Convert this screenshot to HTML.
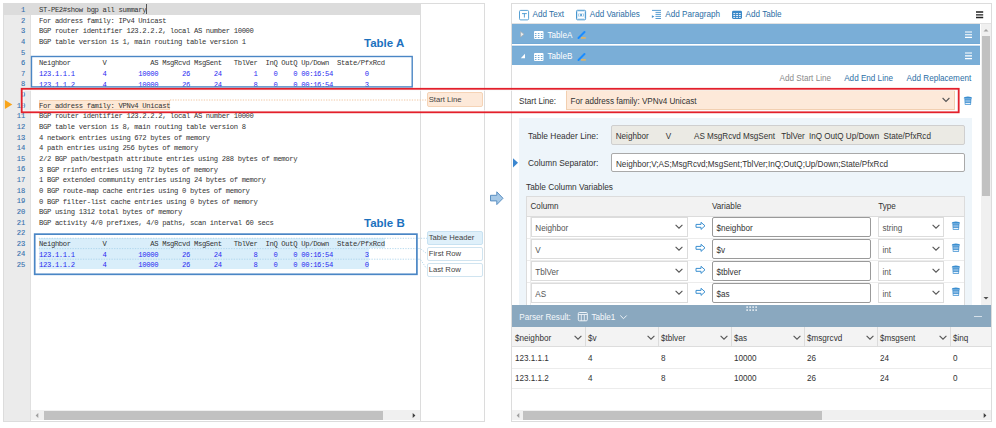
<!DOCTYPE html>
<html><head><meta charset="utf-8"><style>
*{margin:0;padding:0;box-sizing:border-box}
html,body{width:996px;height:428px;overflow:hidden;background:#fff;font-family:"Liberation Sans",sans-serif;position:relative}
.a{position:absolute}
/* left panel */
#lp{position:absolute;left:3px;top:3px;width:482px;height:419px;border:1px solid #dcdcdc;background:#fff}
#gut{position:absolute;left:4px;top:4px;width:27px;height:417px;background:#ebebeb;border-right:1px solid #e0e0e0}
#codebr{position:absolute;left:420px;top:4px;width:1px;height:417px;background:#dcdcdc}
.hl1{position:absolute;left:4px;top:4px;width:416px;height:10.6px;background:#dcdcdc}
.ln{position:absolute;left:4px;width:21.3px;text-align:right;font-family:"Liberation Mono",monospace;font-size:7.1px;line-height:10.63px;height:10.63px;color:#3470ae;padding-top:1px;-webkit-text-stroke:0.1px #3470ae}
.cl{position:absolute;left:39px;white-space:pre;font-family:"Liberation Mono",monospace;font-size:7.2px;letter-spacing:-0.34px;line-height:10.63px;height:10.63px;color:#333;padding-top:1.2px}
.cl.blue{color:#2b2bf0}
.tlabel{position:absolute;font-weight:bold;font-size:11.5px;color:#1c71be;line-height:12px}
.ui{font-family:"Liberation Sans",sans-serif;font-size:8.15px;line-height:10px;white-space:pre;padding-top:1.4px}
.lbox{position:absolute;left:427.2px;width:55.6px;height:14px;border:1px solid #d0e4f0;border-radius:2px;background:#fff;font-size:7.7px;line-height:12.2px;padding-left:0.5px;color:#444}
/* scrollbars */
.hsb{position:absolute;height:10px;background:#f0f0f0}
.thumb{position:absolute;background:#c1c1c1}
/* right panel */
#rp{position:absolute;left:511px;top:3px;width:481px;height:419px;border:1px solid #dcdcdc;background:#fff}
.bar{position:absolute;left:512px;width:468px;background:#7aaed7}
.tb{position:absolute;color:#2c6ea5}

</style></head><body>
<div id="lp"></div>
<div id="gut"></div>
<div class="hl1"></div>
<div id="codebr"></div>
<!-- code highlights -->
<div class="a" style="left:38.5px;top:99.5px;width:131.5px;height:10.7px;background:#fde8d6;border:1px solid #f5d2b3"></div>
<div class="a" style="left:38.7px;top:237.9px;width:346.6px;height:10.2px;background:#d9eefa"></div>
<div class="a" style="left:38.7px;top:248.1px;width:330.3px;height:21.3px;background:#d9eefa"></div>
<svg class="a" style="left:0;top:0" width="996" height="428" viewBox="0 0 996 428">
<path d="M38.7 238.3H427M38.7 248.6H420.3L426.5 253.4M38.7 259.2H420.3L426.5 268.5" fill="none" stroke="#a6d0ea" stroke-width="0.8" stroke-dasharray="1.3 1.3"/>
<path d="M170 100H427" fill="none" stroke="#f0c6a2" stroke-width="1" stroke-dasharray="1.3 1.3"/>
<path d="M4.9 100.1L12.3 104.6L4.9 109.1Z" fill="#f9a51a"/>
</svg>
<div class="ln" style="top:4.00px">1</div>
<div class="ln" style="top:14.63px">2</div>
<div class="ln" style="top:25.26px">3</div>
<div class="ln" style="top:35.89px">4</div>
<div class="ln" style="top:46.52px">5</div>
<div class="ln" style="top:57.15px">6</div>
<div class="ln" style="top:67.78px">7</div>
<div class="ln" style="top:78.41px">8</div>
<div class="ln" style="top:89.04px">9</div>
<div class="ln" style="top:99.67px">10</div>
<div class="ln" style="top:110.30px">11</div>
<div class="ln" style="top:120.93px">12</div>
<div class="ln" style="top:131.56px">13</div>
<div class="ln" style="top:142.19px">14</div>
<div class="ln" style="top:152.82px">15</div>
<div class="ln" style="top:163.45px">16</div>
<div class="ln" style="top:174.08px">17</div>
<div class="ln" style="top:184.71px">18</div>
<div class="ln" style="top:195.34px">19</div>
<div class="ln" style="top:205.97px">20</div>
<div class="ln" style="top:216.60px">21</div>
<div class="ln" style="top:227.23px">22</div>
<div class="ln" style="top:237.86px">23</div>
<div class="ln" style="top:248.49px">24</div>
<div class="ln" style="top:259.12px">25</div>
<div class="cl" style="top:4.00px">ST-PE2#show bgp all summary</div>
<div class="cl" style="top:14.63px">For address family: IPv4 Unicast</div>
<div class="cl" style="top:25.26px">BGP router identifier 123.2.2.2, local AS number 10000</div>
<div class="cl" style="top:35.89px">BGP table version is 1, main routing table version 1</div>
<div class="cl" style="top:46.52px"></div>
<div class="cl" style="top:57.15px">Neighbor        V           AS MsgRcvd MsgSent   TblVer  InQ OutQ Up/Down  State/PfxRcd</div>
<div class="cl blue" style="top:67.78px">123.1.1.1       4        10000      26      24        1    0    0 00:16:54        0</div>
<div class="cl blue" style="top:78.41px">123.1.1.2       4        10000      26      24        8    0    0 00:16:54        3</div>
<div class="cl" style="top:89.04px"></div>
<div class="cl" style="top:99.67px">For address family: VPNv4 Unicast</div>
<div class="cl" style="top:110.30px">BGP router identifier 123.2.2.2, local AS number 10000</div>
<div class="cl" style="top:120.93px">BGP table version is 8, main routing table version 8</div>
<div class="cl" style="top:131.56px">4 network entries using 672 bytes of memory</div>
<div class="cl" style="top:142.19px">4 path entries using 256 bytes of memory</div>
<div class="cl" style="top:152.82px">2/2 BGP path/bestpath attribute entries using 288 bytes of memory</div>
<div class="cl" style="top:163.45px">3 BGP rrinfo entries using 72 bytes of memory</div>
<div class="cl" style="top:174.08px">1 BGP extended community entries using 24 bytes of memory</div>
<div class="cl" style="top:184.71px">0 BGP route-map cache entries using 0 bytes of memory</div>
<div class="cl" style="top:195.34px">0 BGP filter-list cache entries using 0 bytes of memory</div>
<div class="cl" style="top:205.97px">BGP using 1312 total bytes of memory</div>
<div class="cl" style="top:216.60px">BGP activity 4/0 prefixes, 4/0 paths, scan interval 60 secs</div>
<div class="cl" style="top:227.23px"></div>
<div class="cl" style="top:237.86px">Neighbor        V           AS MsgRcvd MsgSent   TblVer  InQ OutQ Up/Down  State/PfxRcd</div>
<div class="cl blue" style="top:248.49px">123.1.1.1       4        10000      26      24        8    0    0 00:16:54        3</div>
<div class="cl blue" style="top:259.12px">123.1.1.2       4        10000      26      24        8    0    0 00:16:54        0</div>
<div class="a" style="left:145.9px;top:4.2px;width:1.5px;height:10.3px;background:#555"></div>
<svg class="a" style="left:0;top:0" width="996" height="428" viewBox="0 0 996 428"><rect x="31.5" y="56.5" width="380.7" height="30.4" fill="none" stroke="#4a86c5" stroke-width="1.4"/><rect x="34.7" y="234.15" width="382.2" height="40.15" fill="none" stroke="#4a86c5" stroke-width="1.7"/></svg>
<div class="tlabel" style="left:364px;top:37px">Table A</div>
<div class="tlabel" style="left:364px;top:217px">Table B</div>
<div class="lbox" style="top:92px;height:15px;line-height:13.2px;background:#fde9d9;border-color:#f5d3b6">Start Line</div>
<div class="lbox" style="top:230.5px;background:#dff0fa;border-color:#c8e2f2">Table Header</div>
<div class="lbox" style="top:247px">First Row</div>
<div class="lbox" style="top:263px">Last Row</div>
<div class="hsb" style="left:31px;top:410px;width:389px"></div>
<div class="thumb" style="left:43.5px;top:410.5px;width:339.5px;height:9px"></div>

<!-- arrow between panels -->
<svg class="a" style="left:488px;top:189px" width="18" height="18" viewBox="0 0 18 18"><path d="M2.5 6.3H8.8V2.8L15 9.3L8.8 15.6V11.9H2.5Z" fill="#a6c8e6" stroke="#5a8fc2" stroke-width="1"/></svg>

<div id="rp"></div>
<!-- toolbar -->
<div class="a" style="left:512px;top:23px;width:479px;height:1px;background:#e2e2e2"></div>
<svg class="a" style="left:518px;top:9px" width="12" height="12" viewBox="0 0 12 12"><rect x="1.5" y="1.4" width="9.1" height="9.5" rx="1.2" fill="none" stroke="#4596cf" stroke-width="0.9"/><path d="M4 4.6H8.8M6.4 4.6V8.5" stroke="#4596cf" stroke-width="0.9" fill="none"/></svg>
<div class="tb ui" style="left:532.5px;top:9px">Add Text</div>
<svg class="a" style="left:575px;top:9px" width="12" height="12" viewBox="0 0 12 12"><rect x="1.5" y="1.3" width="9.1" height="9.5" rx="1" fill="none" stroke="#4596cf" stroke-width="1"/><rect x="2.6" y="2.6" width="6.9" height="6.9" fill="none" stroke="#bcdaf0" stroke-width="0.6"/><path d="M3.9 4.5Q3.3 6 3.9 7.6M8.2 4.5Q8.8 6 8.2 7.6" stroke="#6aaad8" stroke-width="0.7" fill="none"/><path d="M5.3 4.6L6.8 7.4M6.8 4.6L5.3 7.4" stroke="#3d8ecb" stroke-width="0.9"/></svg>
<div class="tb ui" style="left:589.8px;top:9px">Add Variables</div>
<svg class="a" style="left:650px;top:8px" width="13" height="13" viewBox="0 0 13 13"><path d="M2 2.4H11M5.5 4.4H11M5.5 6.4H11M5.5 8.4H11M5.5 10.5H11" stroke="#4592cd" stroke-width="0.9"/><path d="M1.9 7.3L4.4 8.6L1.9 9.9Z" fill="#4592cd"/></svg>
<div class="tb ui" style="left:665.3px;top:9px">Add Paragraph</div>
<svg class="a" style="left:731px;top:10px" width="12" height="10" viewBox="0 0 12 10"><rect x="1" y="0.8" width="10" height="8.2" rx="1.4" fill="#3a88c8"/><path d="M2.3 3.6H4.2M5.1 3.6H7M7.9 3.6H9.8M2.3 5.5H4.2M5.1 5.5H7M7.9 5.5H9.8M2.3 7.4H4.2M5.1 7.4H7M7.9 7.4H9.8" stroke="#fff" stroke-width="0.9"/></svg>
<div class="tb ui" style="left:745.6px;top:9px">Add Table</div>
<svg class="a" style="left:975px;top:10px" width="10" height="10" viewBox="0 0 10 10"><path d="M1 2H8.2M1 4.9H8.2M1 7.5H8.2" stroke="#222" stroke-width="1.3"/></svg>

<!-- table bars -->
<div class="bar" style="top:24px;height:19.5px"></div>
<div class="bar" style="top:46px;height:18.5px"></div>
<div class="a" style="left:512px;top:45px;width:468px;height:1px;background:#cfe1f0"></div>
<div class="a" style="left:512px;top:43px;width:468px;height:1px;background:#72a9d6"></div>
<div class="a" style="left:512px;top:46px;width:468px;height:1px;background:#72a9d6"></div>
<svg class="a" style="left:519px;top:30px" width="7" height="8" viewBox="0 0 7 8"><path d="M1.6 1.6L5 4.3L1.6 7Z" fill="#e8eef2" stroke="#a9a9a9" stroke-width="0.6"/></svg>
<svg class="a" style="left:519px;top:52px" width="8" height="8" viewBox="0 0 8 8"><path d="M6 1.8V6.2H1.8Z" fill="#fff"/></svg>
<svg class="a" style="left:533px;top:30px" width="12" height="10" viewBox="0 0 12 10"><rect x="1" y="1" width="9.5" height="8" rx="1" fill="#fff"/><path d="M1.85 3h1.6v1h-1.6zM4.85 3h1.6v1h-1.6zM7.85 3h1.6v1h-1.6zM1.85 5h1.6v1h-1.6zM4.85 5h1.6v1h-1.6zM7.85 5h1.6v1h-1.6zM1.85 6.9h1.6v1h-1.6zM4.85 6.9h1.6v1h-1.6zM7.85 6.9h1.6v1h-1.6z" fill="#7aaed7"/></svg>
<svg class="a" style="left:533px;top:52px" width="12" height="10" viewBox="0 0 12 10"><rect x="1" y="1" width="9.5" height="8" rx="1" fill="#fff"/><path d="M1.85 3h1.6v1h-1.6zM4.85 3h1.6v1h-1.6zM7.85 3h1.6v1h-1.6zM1.85 5h1.6v1h-1.6zM4.85 5h1.6v1h-1.6zM7.85 5h1.6v1h-1.6zM1.85 6.9h1.6v1h-1.6zM4.85 6.9h1.6v1h-1.6zM7.85 6.9h1.6v1h-1.6z" fill="#7aaed7"/></svg>
<div class="a ui" style="left:547.5px;top:29.5px;color:#fff">TableA</div>
<div class="a ui" style="left:547.5px;top:51px;color:#fff">TableB</div>
<svg class="a" style="left:576px;top:30px" width="12" height="10" viewBox="0 0 12 10"><path d="M2.5 8L8.5 2" stroke="#1a8cff" stroke-width="2" stroke-linecap="round"/><path d="M5 7.9H9.8" stroke="#e8b45a" stroke-width="1.5"/></svg>
<svg class="a" style="left:576px;top:51.5px" width="12" height="10" viewBox="0 0 12 10"><path d="M2.5 8L8.5 2" stroke="#1a8cff" stroke-width="2" stroke-linecap="round"/><path d="M5 7.9H9.8" stroke="#e8b45a" stroke-width="1.5"/></svg>
<svg class="a" style="left:964px;top:29px" width="10" height="11" viewBox="0 0 10 11"><path d="M1 3H8M1 5.75H8M1 8.4H8" stroke="#fff" stroke-width="1.2"/></svg>
<svg class="a" style="left:964px;top:50px" width="10" height="11" viewBox="0 0 10 11"><path d="M1 3H8M1 5.8H8M1 8.7H8" stroke="#fff" stroke-width="1.2"/></svg>

<!-- vertical scrollbar -->
<div class="a" style="left:980.5px;top:24px;width:10.5px;height:281px;background:#f0f0f0"></div>
<div class="a" style="left:981.5px;top:36px;width:8.5px;height:160px;background:#c1c1c1"></div>
<svg class="a" style="left:981px;top:26px" width="10" height="8" viewBox="0 0 10 8"><path d="M2.5 5.5L5 3L7.5 5.5Z" fill="#a3a3a3"/></svg>
<svg class="a" style="left:981px;top:294px" width="10" height="8" viewBox="0 0 10 8"><path d="M2.5 3L5 5.5L7.5 3Z" fill="#505050"/></svg>

<!-- action links -->
<div class="a ui" style="left:779.5px;top:72.8px;color:#8a8a8a">Add Start Line</div>
<div class="a ui tb" style="left:844.2px;top:72.8px">Add End Line</div>
<div class="a ui tb" style="left:906.6px;top:72.8px">Add Replacement</div>

<!-- start line row -->
<div class="a ui" style="left:519px;top:95.5px;color:#333">Start Line:</div>
<div class="a" style="left:565.8px;top:90.2px;width:389.6px;height:19.8px;background:#fde9d9;border:1px solid #f2cfb0"></div>
<div class="a ui" style="left:570.6px;top:95.5px;color:#333">For address family: VPNv4 Unicast</div>
<svg class="a" style="left:941px;top:96px" width="10" height="8" viewBox="0 0 10 8"><path d="M1.6 2L5 5.4L8.4 2" stroke="#555" stroke-width="1.1" fill="none"/></svg>
<svg class="a" style="left:962px;top:95.4px" width="12" height="11" viewBox="0 0 12 11"><path d="M1.8 3.2Q1.8 1.6 5.9 1.6Q10 1.6 10 3.2V3.6H1.8Z" fill="#3b8ed0"/><path d="M2.4 3.4H9.4L9 9.8H2.8Z" fill="#3b8ed0"/><path d="M3.3 5.2H8.5M3.3 6.8H8.5" stroke="#c5def3" stroke-width="0.75"/><path d="M3.4 8.5H8.4" stroke="#e6f1fa" stroke-width="1"/></svg>

<!-- red highlight box -->
<svg class="a" style="left:0;top:0" width="996" height="428" viewBox="0 0 996 428"><rect x="23.1" y="90.2" width="934.2" height="20.7" fill="none" stroke="#fafafa" stroke-width="1"/><rect x="21.7" y="88.8" width="937" height="23.5" fill="none" stroke="#e3202b" stroke-width="1.8"/></svg>

<!-- table section -->
<div class="a" style="left:519.3px;top:117.8px;width:452.5px;height:187.5px;background:#eef5fa"></div>
<svg class="a" style="left:512px;top:157px" width="8" height="12" viewBox="0 0 8 12"><path d="M1 1.3L6 5.8L1 10.5Z" fill="#3b86cf"/></svg>
<div class="a ui" style="left:528px;top:129.5px;color:#333;font-size:8.4px">Table Header Line:</div>
<div class="a" style="left:611.2px;top:125.3px;width:354px;height:19.4px;background:#ebeae4;border:1px solid #cfcfcf;border-radius:2px"></div>
<div class="a ui" style="left:615.7px;top:130.8px;color:#333;word-spacing:-0.13px">Neighbor        V           AS MsgRcvd MsgSent   TblVer  InQ OutQ Up/Down  State/PfxRcd</div>
<div class="a ui" style="left:528px;top:157px;color:#333;font-size:8.4px">Column Separator:</div>
<div class="a" style="left:611.2px;top:153px;width:354px;height:19.4px;background:#fff;border:1px solid #a9a9a9;border-radius:2px"></div>
<div class="a ui" style="left:616px;top:158.6px;color:#333">Neighbor;V;AS;MsgRcvd;MsgSent;TblVer;InQ;OutQ;Up/Down;State/PfxRcd</div>
<div class="a ui" style="left:526px;top:180.9px;color:#333;font-size:8.3px">Table Column Variables</div>

<!-- column variables table -->
<div class="a" style="left:526.2px;top:195.5px;width:439px;height:110px;background:#fff;border:1px solid #dcdcdc;border-bottom:none"></div>
<div class="a" style="left:527.2px;top:196.5px;width:437px;height:20.5px;background:#f2f2f2;border-bottom:1px solid #dcdcdc"></div>
<div class="a ui" style="left:530.5px;top:200.5px;color:#333">Column</div>
<div class="a ui" style="left:712px;top:200.5px;color:#333">Variable</div>
<div class="a ui" style="left:878.2px;top:200.5px;color:#333">Type</div>
<div class="a" style="left:531.2px;top:217.00px;width:157px;height:20px;background:#fff;border:1px solid #dcdcdc"></div>
<div class="a ui" style="left:535.3px;top:222.40px;color:#555">Neighbor</div>
<svg class="a" style="left:674px;top:223.00px" width="10" height="8" viewBox="0 0 10 8"><path d="M1.6 1.8L5 5.2L8.4 1.8" stroke="#555" stroke-width="1.1" fill="none"/></svg>
<svg class="a" style="left:694px;top:221.00px" width="13" height="10" viewBox="0 0 13 10"><path d="M2 3.4H7V1.3L11 4.8L7 8.4V6.3H2Z" fill="none" stroke="#3a8fd0" stroke-width="1"/></svg>
<div class="a" style="left:712.3px;top:217.00px;width:158.3px;height:20px;background:#fff;border:1px solid #9a9a9a;border-radius:2px"></div>
<div class="a ui" style="left:716.5px;top:222.40px;color:#333">$neighbor</div>
<div class="a" style="left:878.2px;top:217.00px;width:66.2px;height:20px;background:#fff;border:1px solid #dcdcdc"></div>
<div class="a ui" style="left:882.5px;top:222.40px;color:#555">string</div>
<svg class="a" style="left:931px;top:223.00px" width="10" height="8" viewBox="0 0 10 8"><path d="M1.6 1.8L5 5.2L8.4 1.8" stroke="#555" stroke-width="1.1" fill="none"/></svg>
<svg class="a" style="left:950px;top:220.10px" width="12" height="11" viewBox="0 0 12 11"><path d="M1.8 3.2Q1.8 1.6 5.9 1.6Q10 1.6 10 3.2V3.6H1.8Z" fill="#3b8ed0"/><path d="M2.4 3.4H9.4L9 9.8H2.8Z" fill="#3b8ed0"/><path d="M3.3 5.2H8.5M3.3 6.8H8.5" stroke="#c5def3" stroke-width="0.75"/><path d="M3.4 8.5H8.4" stroke="#e6f1fa" stroke-width="1"/></svg>
<div class="a" style="left:527.2px;top:238.00px;width:437px;height:1px;background:#ececec"></div>
<div class="a" style="left:531.2px;top:239.00px;width:157px;height:20px;background:#fff;border:1px solid #dcdcdc"></div>
<div class="a ui" style="left:535.3px;top:244.40px;color:#555">V</div>
<svg class="a" style="left:674px;top:245.00px" width="10" height="8" viewBox="0 0 10 8"><path d="M1.6 1.8L5 5.2L8.4 1.8" stroke="#555" stroke-width="1.1" fill="none"/></svg>
<svg class="a" style="left:694px;top:243.00px" width="13" height="10" viewBox="0 0 13 10"><path d="M2 3.4H7V1.3L11 4.8L7 8.4V6.3H2Z" fill="none" stroke="#3a8fd0" stroke-width="1"/></svg>
<div class="a" style="left:712.3px;top:239.00px;width:158.3px;height:20px;background:#fff;border:1px solid #9a9a9a;border-radius:2px"></div>
<div class="a ui" style="left:716.5px;top:244.40px;color:#333">$v</div>
<div class="a" style="left:878.2px;top:239.00px;width:66.2px;height:20px;background:#fff;border:1px solid #dcdcdc"></div>
<div class="a ui" style="left:882.5px;top:244.40px;color:#555">int</div>
<svg class="a" style="left:931px;top:245.00px" width="10" height="8" viewBox="0 0 10 8"><path d="M1.6 1.8L5 5.2L8.4 1.8" stroke="#555" stroke-width="1.1" fill="none"/></svg>
<svg class="a" style="left:950px;top:242.10px" width="12" height="11" viewBox="0 0 12 11"><path d="M1.8 3.2Q1.8 1.6 5.9 1.6Q10 1.6 10 3.2V3.6H1.8Z" fill="#3b8ed0"/><path d="M2.4 3.4H9.4L9 9.8H2.8Z" fill="#3b8ed0"/><path d="M3.3 5.2H8.5M3.3 6.8H8.5" stroke="#c5def3" stroke-width="0.75"/><path d="M3.4 8.5H8.4" stroke="#e6f1fa" stroke-width="1"/></svg>
<div class="a" style="left:527.2px;top:260.00px;width:437px;height:1px;background:#ececec"></div>
<div class="a" style="left:531.2px;top:261.00px;width:157px;height:20px;background:#fff;border:1px solid #dcdcdc"></div>
<div class="a ui" style="left:535.3px;top:266.40px;color:#555">TblVer</div>
<svg class="a" style="left:674px;top:267.00px" width="10" height="8" viewBox="0 0 10 8"><path d="M1.6 1.8L5 5.2L8.4 1.8" stroke="#555" stroke-width="1.1" fill="none"/></svg>
<svg class="a" style="left:694px;top:265.00px" width="13" height="10" viewBox="0 0 13 10"><path d="M2 3.4H7V1.3L11 4.8L7 8.4V6.3H2Z" fill="none" stroke="#3a8fd0" stroke-width="1"/></svg>
<div class="a" style="left:712.3px;top:261.00px;width:158.3px;height:20px;background:#fff;border:1px solid #9a9a9a;border-radius:2px"></div>
<div class="a ui" style="left:716.5px;top:266.40px;color:#333">$tblver</div>
<div class="a" style="left:878.2px;top:261.00px;width:66.2px;height:20px;background:#fff;border:1px solid #dcdcdc"></div>
<div class="a ui" style="left:882.5px;top:266.40px;color:#555">int</div>
<svg class="a" style="left:931px;top:267.00px" width="10" height="8" viewBox="0 0 10 8"><path d="M1.6 1.8L5 5.2L8.4 1.8" stroke="#555" stroke-width="1.1" fill="none"/></svg>
<svg class="a" style="left:950px;top:264.10px" width="12" height="11" viewBox="0 0 12 11"><path d="M1.8 3.2Q1.8 1.6 5.9 1.6Q10 1.6 10 3.2V3.6H1.8Z" fill="#3b8ed0"/><path d="M2.4 3.4H9.4L9 9.8H2.8Z" fill="#3b8ed0"/><path d="M3.3 5.2H8.5M3.3 6.8H8.5" stroke="#c5def3" stroke-width="0.75"/><path d="M3.4 8.5H8.4" stroke="#e6f1fa" stroke-width="1"/></svg>
<div class="a" style="left:527.2px;top:282.00px;width:437px;height:1px;background:#ececec"></div>
<div class="a" style="left:531.2px;top:283.00px;width:157px;height:20px;background:#fff;border:1px solid #dcdcdc"></div>
<div class="a ui" style="left:535.3px;top:288.40px;color:#555">AS</div>
<svg class="a" style="left:674px;top:289.00px" width="10" height="8" viewBox="0 0 10 8"><path d="M1.6 1.8L5 5.2L8.4 1.8" stroke="#555" stroke-width="1.1" fill="none"/></svg>
<svg class="a" style="left:694px;top:287.00px" width="13" height="10" viewBox="0 0 13 10"><path d="M2 3.4H7V1.3L11 4.8L7 8.4V6.3H2Z" fill="none" stroke="#3a8fd0" stroke-width="1"/></svg>
<div class="a" style="left:712.3px;top:283.00px;width:158.3px;height:20px;background:#fff;border:1px solid #9a9a9a;border-radius:2px"></div>
<div class="a ui" style="left:716.5px;top:288.40px;color:#333">$as</div>
<div class="a" style="left:878.2px;top:283.00px;width:66.2px;height:20px;background:#fff;border:1px solid #dcdcdc"></div>
<div class="a ui" style="left:882.5px;top:288.40px;color:#555">int</div>
<svg class="a" style="left:931px;top:289.00px" width="10" height="8" viewBox="0 0 10 8"><path d="M1.6 1.8L5 5.2L8.4 1.8" stroke="#555" stroke-width="1.1" fill="none"/></svg>
<svg class="a" style="left:950px;top:286.10px" width="12" height="11" viewBox="0 0 12 11"><path d="M1.8 3.2Q1.8 1.6 5.9 1.6Q10 1.6 10 3.2V3.6H1.8Z" fill="#3b8ed0"/><path d="M2.4 3.4H9.4L9 9.8H2.8Z" fill="#3b8ed0"/><path d="M3.3 5.2H8.5M3.3 6.8H8.5" stroke="#c5def3" stroke-width="0.75"/><path d="M3.4 8.5H8.4" stroke="#e6f1fa" stroke-width="1"/></svg>
<div class="a" style="left:530px;top:216.5px;width:1px;height:89px;background:#ececec"></div>

<!-- parser result -->
<div class="a" style="left:511.5px;top:305.3px;width:479.5px;height:21.7px;background:#8aa8bf"></div>
<svg class="a" style="left:745px;top:305px" width="14" height="8" viewBox="0 0 14 8"><path d="M1.3 1.2h1.7v1.7h-1.7zM4.3 1.2h1.7v1.7h-1.7zM7.3 1.2h1.7v1.7h-1.7zM10.3 1.2h1.7v1.7h-1.7zM1.3 4.2h1.7v1.7h-1.7zM4.3 4.2h1.7v1.7h-1.7zM7.3 4.2h1.7v1.7h-1.7zM10.3 4.2h1.7v1.7h-1.7z" fill="#dae4ec"/></svg>
<div class="a ui" style="left:519.3px;top:312px;color:#f5f8fb">Parser Result:</div>
<svg class="a" style="left:577px;top:311px" width="12" height="11" viewBox="0 0 12 11"><rect x="1.3" y="1.5" width="9" height="8.3" rx="1" fill="none" stroke="#eef3f7" stroke-width="1"/><path d="M1.3 3.5H10.3M4.3 3.5V9.8M7.3 3.5V9.8" stroke="#eef3f7" stroke-width="0.9"/></svg>
<div class="a ui" style="left:591.4px;top:311.8px;color:#f5f8fb">Table1</div>
<svg class="a" style="left:619px;top:313.8px" width="9" height="7" viewBox="0 0 9 7"><path d="M1.3 1.5L4.5 4.7L7.7 1.5" stroke="#eef3f7" stroke-width="1" fill="none"/></svg>
<div class="a" style="left:974px;top:315.5px;width:8px;height:1.2px;background:#d5e0e9"></div>
<div class="a" style="left:512px;top:327px;width:479px;height:20px;background:#f3f3f3;border-bottom:1.5px solid #dddddd"></div>
<div class="a" style="left:512px;top:367.5px;width:479px;height:1px;background:#ececec"></div>
<div class="a" style="left:512px;top:388px;width:479px;height:1px;background:#ececec"></div>
<div class="a ui" style="left:515.00px;top:332.6px;color:#333">$neighbor</div>
<div class="a ui" style="left:515.00px;top:352.2px;color:#333">123.1.1.1</div>
<div class="a ui" style="left:515.00px;top:372.5px;color:#333">123.1.1.2</div>
<svg class="a" style="left:573.00px;top:333.5px" width="10" height="8" viewBox="0 0 10 8"><path d="M1.6 1.8L5 5.2L8.4 1.8" stroke="#555" stroke-width="1.1" fill="none"/></svg>
<div class="a" style="left:584.50px;top:327px;width:1px;height:20px;background:#dcdcdc"></div>
<div class="a ui" style="left:588.00px;top:332.6px;color:#333">$v</div>
<div class="a ui" style="left:588.00px;top:352.2px;color:#333">4</div>
<div class="a ui" style="left:588.00px;top:372.5px;color:#333">4</div>
<svg class="a" style="left:646.00px;top:333.5px" width="10" height="8" viewBox="0 0 10 8"><path d="M1.6 1.8L5 5.2L8.4 1.8" stroke="#555" stroke-width="1.1" fill="none"/></svg>
<div class="a" style="left:657.50px;top:327px;width:1px;height:20px;background:#dcdcdc"></div>
<div class="a ui" style="left:661.00px;top:332.6px;color:#333">$tblver</div>
<div class="a ui" style="left:661.00px;top:352.2px;color:#333">8</div>
<div class="a ui" style="left:661.00px;top:372.5px;color:#333">8</div>
<svg class="a" style="left:719.00px;top:333.5px" width="10" height="8" viewBox="0 0 10 8"><path d="M1.6 1.8L5 5.2L8.4 1.8" stroke="#555" stroke-width="1.1" fill="none"/></svg>
<div class="a" style="left:730.50px;top:327px;width:1px;height:20px;background:#dcdcdc"></div>
<div class="a ui" style="left:734.00px;top:332.6px;color:#333">$as</div>
<div class="a ui" style="left:734.00px;top:352.2px;color:#333">10000</div>
<div class="a ui" style="left:734.00px;top:372.5px;color:#333">10000</div>
<svg class="a" style="left:792.00px;top:333.5px" width="10" height="8" viewBox="0 0 10 8"><path d="M1.6 1.8L5 5.2L8.4 1.8" stroke="#555" stroke-width="1.1" fill="none"/></svg>
<div class="a" style="left:803.50px;top:327px;width:1px;height:20px;background:#dcdcdc"></div>
<div class="a ui" style="left:807.00px;top:332.6px;color:#333">$msgrcvd</div>
<div class="a ui" style="left:807.00px;top:352.2px;color:#333">26</div>
<div class="a ui" style="left:807.00px;top:372.5px;color:#333">26</div>
<svg class="a" style="left:865.00px;top:333.5px" width="10" height="8" viewBox="0 0 10 8"><path d="M1.6 1.8L5 5.2L8.4 1.8" stroke="#555" stroke-width="1.1" fill="none"/></svg>
<div class="a" style="left:876.50px;top:327px;width:1px;height:20px;background:#dcdcdc"></div>
<div class="a ui" style="left:880.00px;top:332.6px;color:#333">$msgsent</div>
<div class="a ui" style="left:880.00px;top:352.2px;color:#333">24</div>
<div class="a ui" style="left:880.00px;top:372.5px;color:#333">24</div>
<svg class="a" style="left:938.00px;top:333.5px" width="10" height="8" viewBox="0 0 10 8"><path d="M1.6 1.8L5 5.2L8.4 1.8" stroke="#555" stroke-width="1.1" fill="none"/></svg>
<div class="a" style="left:949.50px;top:327px;width:1px;height:20px;background:#dcdcdc"></div>
<div class="a ui" style="left:953.00px;top:332.6px;color:#333">$inq</div>
<div class="a ui" style="left:953.00px;top:352.2px;color:#333">0</div>
<div class="a ui" style="left:953.00px;top:372.5px;color:#333">0</div>
<div class="hsb" style="left:512px;top:410.3px;width:479px"></div>
<div class="thumb" style="left:523.3px;top:410.8px;width:298.4px;height:9px"></div>
<svg class="a" style="left:514px;top:411px" width="8" height="9" viewBox="0 0 8 9"><path d="M5.3 2L2.6 4.5L5.3 7Z" fill="#a0a0a0"/></svg>
<svg class="a" style="left:981px;top:411px" width="8" height="9" viewBox="0 0 8 9"><path d="M2.7 2L5.4 4.5L2.7 7Z" fill="#404040"/></svg>
<svg class="a" style="left:33px;top:411px" width="8" height="9" viewBox="0 0 8 9"><path d="M5.3 2L2.6 4.5L5.3 7Z" fill="#a0a0a0"/></svg>
<svg class="a" style="left:410px;top:411px" width="8" height="9" viewBox="0 0 8 9"><path d="M2.7 2L5.4 4.5L2.7 7Z" fill="#404040"/></svg>

</body></html>
